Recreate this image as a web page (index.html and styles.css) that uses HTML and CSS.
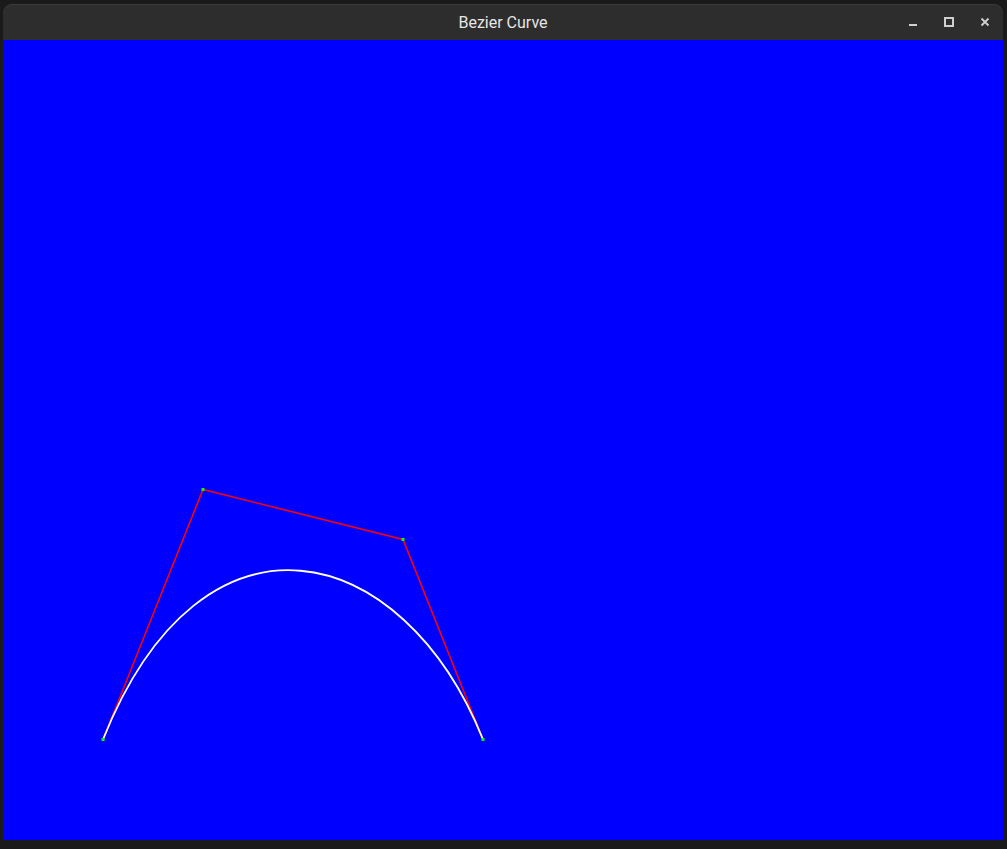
FILE: index.html
```html
<!DOCTYPE html>
<html>
<head>
<meta charset="utf-8">
<link rel="stylesheet" href="styles.css">
</head>
<body>
<div class="window">
  <div class="titlebar">
    <div class="title">Bezier Curve</div>
    <div class="controls">
      <svg class="btn" width="12" height="12" viewBox="0 0 12 12"><rect x="2" y="8" width="8" height="2" fill="#cfcfcf"/></svg>
      <svg class="btn" width="12" height="12" viewBox="0 0 12 12"><rect x="2" y="2" width="8" height="8" fill="none" stroke="#cfcfcf" stroke-width="2"/></svg>
      <svg class="btn" width="12" height="12" viewBox="0 0 12 12"><path d="M2.5 2.5 L9.5 9.5 M9.5 2.5 L2.5 9.5" stroke="#cfcfcf" stroke-width="1.8"/></svg>
    </div>
  </div>
  <svg class="canvas" width="1000" height="800" viewBox="0 0 1000 800">
    <rect width="1000" height="800" fill="#0000ff"/>
    <polyline points="100,699.5 200,449.5 400,499.5 480,699.5" fill="none" stroke="#ff0000" stroke-width="1.6"/>
    <path d="M100,699.5 C200,449.5 400,499.5 480,699.5" fill="none" stroke="#ffffff" stroke-width="1.8"/>
    <rect x="98.5" y="698" width="3" height="3" fill="#00ff00"/>
    <rect x="198.5" y="448" width="3" height="3" fill="#00ff00"/>
    <rect x="398.5" y="498" width="3" height="3" fill="#00ff00"/>
    <rect x="478.5" y="698" width="3" height="3" fill="#00ff00"/>
  </svg>
</div>
</body>
</html>
```
FILE: styles.css
```css
html, body {
  margin: 0;
  padding: 0;
  background: #1a1a1a;
  width: 1007px;
  height: 849px;
  overflow: hidden;
}
body {
  padding: 4px 0 0 3px;
  box-sizing: border-box;
  font-family: Roboto, "Noto Sans", sans-serif;
}
.window {
  width: 1000px;
  display: flex;
  flex-direction: column;
}
.titlebar {
  height: 36px;
  background: #2d2d2d;
  border-radius: 9px 9px 0 0;
  position: relative;
  display: flex;
  align-items: center;
  justify-content: center;
  box-shadow: inset 0 1px 0 #3a3a3a;
}
.title {
  color: #e6e6e6;
  font-size: 16px;
}
.controls {
  position: absolute;
  right: 12px;
  top: 12px;
  display: flex;
  gap: 24px;
}
.btn {
  display: block;
}
.canvas {
  display: block;
}
```
